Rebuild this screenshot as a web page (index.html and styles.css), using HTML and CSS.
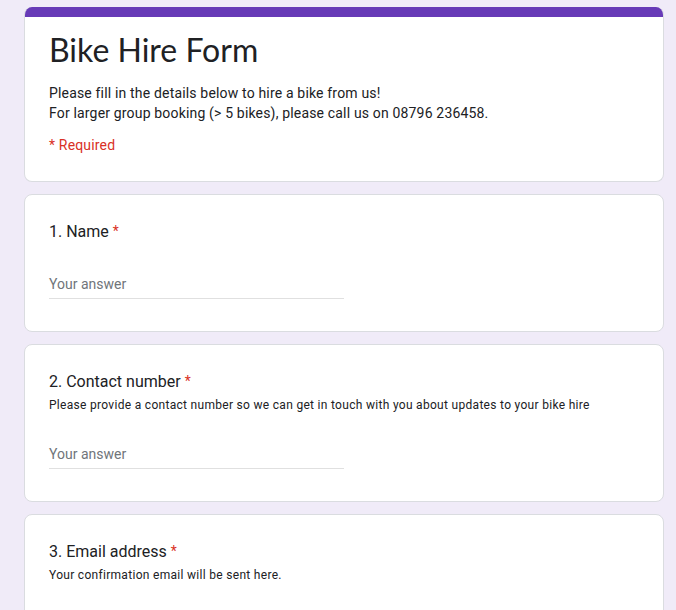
FILE: index.html
```html
<!DOCTYPE html>
<html lang="en">
<head>
<meta charset="utf-8">
<title>Bike Hire Form</title>
<link rel="stylesheet" href="styles.css">
</head>
<body>
<main class="form">
  <section class="card header-card">
    <div class="accent"></div>
    <div class="header-body">
      <h1 class="form-title">Bike Hire Form</h1>
      <p class="form-desc">Please fill in the details below to hire a bike from us!<br>For larger group booking (&gt; 5 bikes), please call us on 08796 236458.</p>
      <p class="required-note">* Required</p>
    </div>
  </section>

  <section class="card question">
    <div class="q-title">1. Name <span class="star">*</span></div>
    <div class="answer"><span class="placeholder">Your answer</span></div>
  </section>

  <section class="card question">
    <div class="q-title">2. Contact number <span class="star">*</span></div>
    <div class="q-desc">Please provide a contact number so we can get in touch with you about updates to your bike hire</div>
    <div class="answer"><span class="placeholder">Your answer</span></div>
  </section>

  <section class="card question">
    <div class="q-title">3. Email address <span class="star">*</span></div>
    <div class="q-desc">Your confirmation email will be sent here.</div>
    <div class="answer"><span class="placeholder">Your answer</span></div>
  </section>
</main>
</body>
</html>
```
FILE: styles.css
```css
html, body {
  margin: 0;
  padding: 0;
  background: #f0ebf8;
}
body {
  font-family: Roboto, "Liberation Sans", Arial, sans-serif;
  color: #202124;
}
.form {
  width: 640px;
  padding: 7px 0 24px 24px;
  display: flex;
  flex-direction: column;
  gap: 12px;
}
.card {
  background: #fff;
  border: 1px solid #dadce0;
  border-radius: 8px;
  box-sizing: border-box;
  width: 640px;
}
.header-card {
  border-top: none;
  overflow: hidden;
}
.accent {
  height: 10px;
  background: #673ab7;
  margin: 0 -1px;
}
.header-body {
  padding: 13px 24px 26px;
}
.form-title {
  margin: 0;
  font-family: Lato, Roboto, sans-serif;
  font-weight: 400;
  font-size: 32px;
  line-height: 40px;
  color: #202124;
}
.form-desc {
  margin: 13px 0 0;
  font-size: 14px;
  line-height: 20px;
  letter-spacing: 0.17px;
}
.required-note {
  margin: 12px 0 0;
  font-size: 14px;
  line-height: 20px;
  letter-spacing: 0.17px;
  color: #d93025;
}
.question {
  padding: 24px 24px 32px;
}
.q-title {
  font-size: 16px;
  line-height: 24px;
  color: #202124;
}
.star {
  color: #d93025;
  font-size: 14px;
  vertical-align: 1px;
}
.q-desc {
  margin-top: 2px;
  font-size: 12px;
  line-height: 18px;
  letter-spacing: 0.3px;
}
.answer {
  margin-top: 22px;
  width: 50%;
  height: 32px;
  border-bottom: 1px solid #e0e0e0;
  display: flex;
  align-items: flex-end;
}
.placeholder {
  font-size: 14px;
  line-height: 20px;
  padding-bottom: 4px;
  color: #70757a;
}
```
